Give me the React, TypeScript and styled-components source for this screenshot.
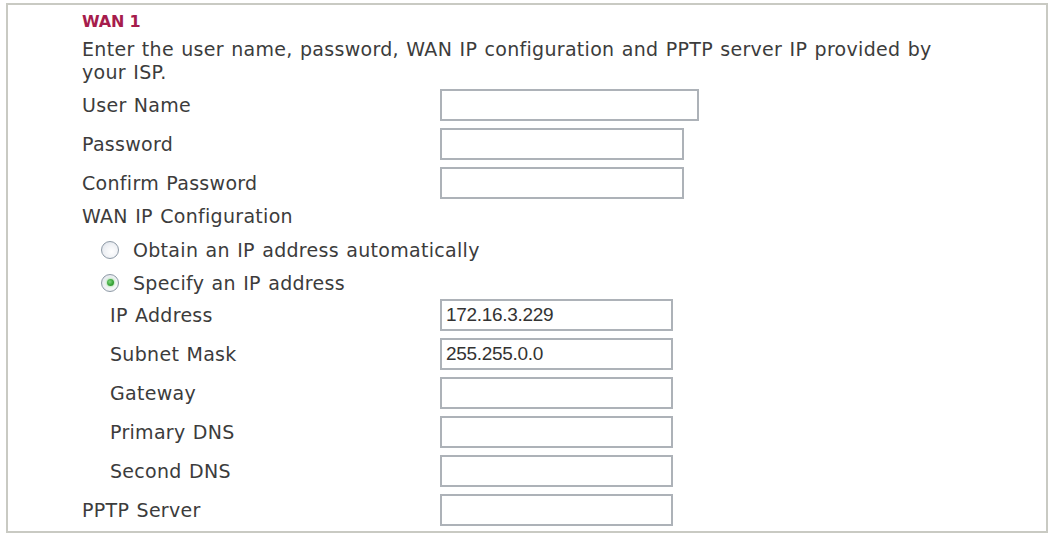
import styled, { createGlobalStyle } from "styled-components";

const GlobalStyle = createGlobalStyle`
    body {
        margin: 0;
        background: #ffffff;
        font-family: "DejaVu Sans", Verdana, sans-serif;
        color: #3c3c3c;
    }
`

interface Field {
    label: string,
    value?: string,
    width: number,
    indent?: boolean
}

const accountFields: Field[] = [
    { label: "User Name", width: 259 },
    { label: "Password", width: 244 },
    { label: "Confirm Password", width: 244 },
]

const ipFields: Field[] = [
    { label: "IP Address", value: "172.16.3.229", width: 233, indent: true },
    { label: "Subnet Mask", value: "255.255.0.0", width: 233, indent: true },
    { label: "Gateway", width: 233, indent: true },
    { label: "Primary DNS", width: 233, indent: true },
    { label: "Second DNS", width: 233, indent: true },
    { label: "PPTP Server", width: 233 },
]

const FieldRow = ({ field }: { field: Field }) => (
    <Row>
        <Label indent={field.indent}>{field.label}</Label>
        <TextBox w={field.width} defaultValue={field.value ?? ""} />
    </Row>
)

export default function App() {
    return (
        <>
            <GlobalStyle />
            <Frame>
                <Heading>WAN 1</Heading>
                <Description>
                    Enter the user name, password, WAN IP configuration and PPTP server IP provided by your ISP.
                </Description>
                <Fields top={5}>
                    {accountFields.map(f => <FieldRow key={f.label} field={f} />)}
                </Fields>
                <SubTitle>WAN IP Configuration</SubTitle>
                <RadioRow>
                    <Radio checked={false} />
                    <span>Obtain an IP address automatically</span>
                </RadioRow>
                <RadioRow>
                    <Radio checked={true} />
                    <span>Specify an IP address</span>
                </RadioRow>
                <Fields top={0}>
                    {ipFields.map(f => <FieldRow key={f.label} field={f} />)}
                </Fields>
            </Frame>
        </>
    )
}

const Frame = styled.div`
    box-sizing: border-box;
    margin: 3px 0 0 6px;
    width: 1042px;
    height: 530px;
    border: 2px solid #c9cac3;
    background: #ffffff;
    padding: 5px 0 0 74px;
    display: flex;
    flex-direction: column;
    font-size: 19px;
    letter-spacing: 0.3px;
    word-spacing: 1px;
`

const Heading = styled.div`
    font-weight: bold;
    font-size: 16px;
    line-height: 24px;
    color: #a61c4c;
    letter-spacing: -0.2px;
    word-spacing: 0;
`

const Description = styled.p`
    margin: 4px 0 0;
    width: 880px;
    line-height: 23px;
`

interface FieldsProps {
    readonly top: number;
}

const Fields = styled.div<FieldsProps>`
    display: flex;
    flex-direction: column;
    gap: 7px;
    margin-top: ${props => props.top}px;
`

const Row = styled.div`
    display: grid;
    grid-template-columns: 358px auto;
    align-items: center;
    height: 32px;
`

interface LabelProps {
    readonly indent?: boolean;
}

const Label = styled.span<LabelProps>`
    padding-left: ${props => props.indent ? "28px" : "0"};
`

interface TextBoxProps {
    readonly w: number;
}

const TextBox = styled.input<TextBoxProps>`
    box-sizing: border-box;
    width: ${props => props.w}px;
    height: 32px;
    border: 2px solid #adb2b8;
    padding: 0 4px;
    font-family: "Liberation Sans", Arial, sans-serif;
    font-size: 19px;
    letter-spacing: -0.3px;
    color: #333333;
    background: #ffffff;
    outline: none;
`

const SubTitle = styled.div`
    line-height: 33px;
    margin-top: 1px;
`

const RadioRow = styled.div`
    display: flex;
    align-items: center;
    gap: 14px;
    height: 33px;
    padding-left: 19px;
`

interface RadioProps {
    readonly checked: boolean;
}

const Radio = styled.span<RadioProps>`
    box-sizing: border-box;
    width: 18px;
    height: 18px;
    border-radius: 50%;
    border: 1.5px solid #8e9aa6;
    background: radial-gradient(circle at 60% 60%, #ffffff 0%, #eef0f4 55%, #d6dce4 100%);
    display: flex;
    align-items: center;
    justify-content: center;

    &::after {
        content: "";
        display: ${props => props.checked ? "block" : "none"};
        width: 7px;
        height: 7px;
        border-radius: 50%;
        background: radial-gradient(circle at 40% 40%, #7fd67f 0%, #33a033 60%, #2a8a2a 100%);
        box-shadow: 0 0 2px 1px #b9e6b9;
    }
`
